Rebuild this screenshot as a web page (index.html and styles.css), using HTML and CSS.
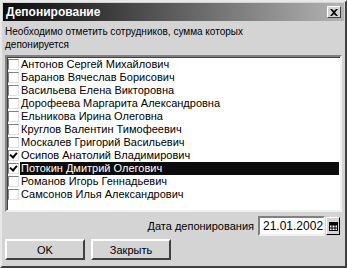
FILE: index.html
```html
<!DOCTYPE html>
<html lang="ru">
<head>
    <meta charset="UTF-8">
    <title>Депонирование</title>
    <link rel="stylesheet" href="styles.css">
</head>
<body>
    <div class="window">
        <div class="titlebar">
            <span class="title">Депонирование</span>
            <button class="close">
                <svg width="8" height="7" viewBox="0 0 8 7"><path d="M0 0h2l2 2 2-2h2L5 3.5 8 7H6L4 5 2 7H0l3-3.5z" fill="#000"/></svg>
            </button>
        </div>
        <div class="content">
            <p class="hint">Необходимо отметить сотрудников, сумма которых депонируется</p>
            <div class="list">
                <div class="row"><span class="check"></span><span class="name">Антонов Сергей Михайлович</span></div>
                <div class="row"><span class="check"></span><span class="name">Баранов Вячеслав Борисович</span></div>
                <div class="row"><span class="check"></span><span class="name">Васильева Елена Викторовна</span></div>
                <div class="row"><span class="check"></span><span class="name">Дорофеева Маргарита Александровна</span></div>
                <div class="row"><span class="check"></span><span class="name">Ельникова Ирина Олеговна</span></div>
                <div class="row"><span class="check"></span><span class="name">Круглов Валентин Тимофеевич</span></div>
                <div class="row"><span class="check"></span><span class="name">Москалев Григорий Васильевич</span></div>
                <div class="row"><span class="check checked"></span><span class="name">Осипов Анатолий Владимирович</span></div>
                <div class="row selected"><span class="check checked"></span><span class="name">Потокин Дмитрий Олегович</span></div>
                <div class="row"><span class="check"></span><span class="name">Романов Игорь Геннадьевич</span></div>
                <div class="row"><span class="check"></span><span class="name">Самсонов Илья Александрович</span></div>
            </div>
            <div class="date-row">
                <span class="label">Дата депонирования</span>
                <span class="date">21.01.2002</span>
                <button class="calendar">
                    <svg width="9" height="9" viewBox="0 0 9 9"><rect x="0.5" y="0.5" width="8" height="8" fill="#fff" stroke="#000"/><path d="M0 3h9M3 3v6M6 3v6M0 6h9" stroke="#000"/><rect x="0" y="0" width="9" height="3" fill="#000"/></svg>
                </button>
            </div>
            <div class="buttons">
                <button class="btn">OK</button>
                <button class="btn">Закрыть</button>
            </div>
        </div>
    </div>
</body>
</html>
```

FILE: styles.css
```css
body {
    margin: 0;
    background: #d4d4d4;
    font-family: 'Liberation Sans', Arial, sans-serif;
    font-size: 11px;
    color: #000;
}
.window {
    width: 347px;
    height: 268px;
    box-sizing: border-box;
    background: #d4d4d4;
    border: 2px solid;
    border-color: #e8e8e8 #404040 #404040 #e8e8e8;
    padding: 1px;
}
.titlebar {
    height: 18px;
    display: flex;
    align-items: center;
    justify-content: space-between;
    padding: 0 3px 0 3px;
    background: linear-gradient(to right, #0c0c0c, #3a3a3a 30%, #b4b4b4);
}
.title {
    color: #fff;
    font-weight: bold;
    font-size: 12px;
}
.close {
    width: 14px;
    height: 12px;
    padding: 0;
    display: flex;
    align-items: center;
    justify-content: center;
    background: #d4d4d4;
    border: 1px solid;
    border-color: #fff #404040 #404040 #fff;
}
.content {
    padding: 4px 2px 0 2px;
}
.hint {
    margin: 0;
    font-size: 10px;
    line-height: 13px;
    width: 280px;
}
.list {
    margin-top: 4px;
    height: 152px;
    background: #fff;
    border: 2px solid;
    border-color: #808080 #f0f0f0 #f0f0f0 #808080;
    box-shadow: inset 1px 1px 0 #404040;
    padding-top: 1px;
}
.row {
    display: flex;
    align-items: center;
    height: 13px;
}
.check {
    flex-shrink: 0;
    width: 9px;
    height: 9px;
    margin: 0 1px 0 1px;
    border: 1px solid;
    border-color: #808080 #e0e0e0 #e0e0e0 #808080;
    background: #fff;
    position: relative;
}
.check.checked::after {
    content: "";
    position: absolute;
    left: 1px;
    top: 1px;
    width: 3px;
    height: 5px;
    border: solid #000;
    border-width: 0 2px 2px 0;
    transform: translate(1px, -1px) rotate(40deg);
}
.name {
    flex: 1;
    line-height: 13px;
    padding-left: 1px;
}
.selected .name {
    background: #0c0c0c;
    color: #fff;
    margin-right: 1px;
}
.date-row {
    display: flex;
    justify-content: flex-end;
    align-items: center;
    margin-top: 4px;
    padding-right: 2px;
}
.label {
    margin-right: 4px;
}
.date {
    width: 60px;
    height: 16px;
    line-height: 16px;
    padding-left: 3px;
    font-size: 12px;
    background: #fff;
    border: 2px solid;
    border-color: #808080 #f0f0f0 #f0f0f0 #808080;
}
.calendar {
    width: 14px;
    height: 18px;
    padding: 0;
    margin-left: 1px;
    display: flex;
    align-items: center;
    justify-content: center;
    background: #d4d4d4;
    border: 1px solid;
    border-color: #fff #000 #000 #fff;
}
.buttons {
    display: flex;
    gap: 6px;
    margin-top: 3px;
}
.btn {
    width: 80px;
    height: 21px;
    padding: 0;
    font-family: inherit;
    font-size: 11px;
    background: #d4d4d4;
    border: 2px solid;
    border-color: #fff #404040 #404040 #fff;
}
```
